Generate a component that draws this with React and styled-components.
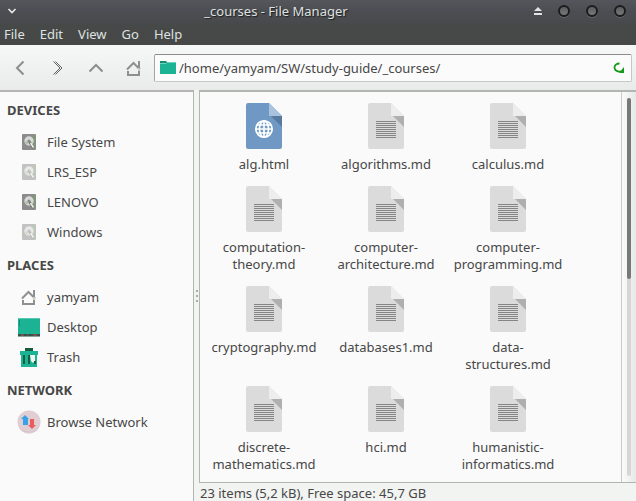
import React from "react";
import styled, { createGlobalStyle } from "styled-components";

const GlobalStyle = createGlobalStyle`
  * { box-sizing: border-box; }
  body { margin: 0; font: 13px/17px "Noto Sans", sans-serif; color: #474747; }
  button, input { font: inherit; color: inherit; }
  svg { display: block; flex: none; }
`;

const Shell = styled.div`
  display: flex;
  flex-direction: column;
  height: 100vh;
  background: #f2f4f2;
`;

const TopBar = styled.header`
  flex: none;
  background: linear-gradient(#55565b, #4c4d52 12px, #464948 26px, #454847);
  color: #dfe1e0;
`;

const TitleRow = styled.div`
  display: flex;
  align-items: center;
  height: 21px;
  padding: 0 10px 0 6px;
`;

const Title = styled.h1`
  flex: 1;
  margin: 0;
  padding-top: 2px;
  font-size: 13px;
  font-weight: 400;
  text-align: center;
  text-shadow: 1px 1px 1px #1d1e20;
`;

const PlainButton = styled.button`
  display: flex;
  align-items: center;
  justify-content: center;
  padding: 0;
  border: 0;
  background: none;
`;

const WindowControls = styled.div`
  display: flex;
  gap: 16px;
`;

const Orb = styled(PlainButton)`
  width: 12px;
  height: 12px;
  border: 2px solid #1b1c1e;
  border-radius: 50%;
  background: linear-gradient(#5b5c5f, #77787a);
  box-shadow: 0 1px 0 #65676a;
`;

const MenuRow = styled.nav`
  display: flex;
  gap: 15px;
  height: 24px;
  padding: 5px 4px 2px;
`;

const Toolbar = styled.div`
  flex: none;
  display: flex;
  align-items: center;
  height: 45px;
  padding: 0 4px 0 1px;
  background: linear-gradient(#f6f8f8, #e8ebea);
`;

const ToolButton = styled(PlainButton)`
  width: 38px;
  height: 32px;
`;

const AddressBar = styled.label`
  flex: 1;
  display: flex;
  align-items: center;
  gap: 3px;
  height: 28px;
  margin-left: 1px;
  padding: 0 6px 0 5px;
  border: 1px solid #c6c8c6;
  border-top-color: #8d8b8f;
  border-left-color: #a5a5a7;
  border-radius: 2px;
  background: #fbfbfb;
`;

const PathInput = styled.input`
  flex: 1;
  min-width: 0;
  padding: 2px 0 0;
  border: 0;
  outline: 0;
  background: none;
`;

const Body = styled.div`
  flex: 1;
  min-height: 0;
  display: grid;
  grid-template-columns: 194px 5px minmax(0, 1fr);
`;

const Sidebar = styled.aside`
  border-top: 2px solid #b4b5b4;
  border-right: 1px solid #b3b5b0;
  background: #fafafa;
`;

const SectionTitle = styled.h2`
  margin: 0;
  padding: 10px 7px 8px;
  font-size: 13px;
  font-weight: 700;
  line-height: 17px;
`;

const PlaceList = styled.ul`
  margin: 0;
  padding: 0;
  list-style: none;
`;

const Place = styled(PlainButton)`
  justify-content: flex-start;
  gap: 6px;
  width: 100%;
  height: 30px;
  padding-left: 17px;
`;

const IconSlot = styled.span`
  display: flex;
  justify-content: center;
  width: 24px;
  opacity: ${(p) => (p.$dim ? 0.5 : 1)};
`;

const Sash = styled.div`
  display: flex;
  flex-direction: column;
  align-items: center;
  justify-content: center;
  gap: 3px;
`;

const Grip = styled.span`
  width: 2px;
  height: 2px;
  background: #a9aba8;
`;

const Main = styled.main`
  display: flex;
  flex-direction: column;
  min-height: 0;
`;

const FilePane = styled.section`
  flex: 1;
  min-height: 0;
  display: flex;
  border: solid #b3b5b0;
  border-width: 2px 0 1px 1px;
  background: #fafafa;
`;

const FileGrid = styled.ul`
  flex: 1;
  display: grid;
  grid-template-columns: repeat(auto-fill, 122px);
  align-content: start;
  row-gap: 13px;
  margin: 0;
  padding: 11px 3px 0;
  overflow: hidden;
  list-style: none;
`;

const FileItem = styled.li`
  display: flex;
  flex-direction: column;
  align-items: center;
  gap: 7px;
`;

const FileName = styled.span`
  max-width: 112px;
  text-align: center;
`;

const ScrollTrack = styled.div`
  flex: none;
  width: 15px;
  padding: 6px 5px;
  border-left: 1px solid #c9cbc9;
  background: linear-gradient(90deg, #fafafa, #e6e9e7);
`;

const ScrollGroove = styled.div`
  height: 100%;
  border-radius: 2px;
  background: #d5d6d5;
`;

const ScrollThumb = styled.div`
  width: 4px;
  height: 48%;
  border-radius: 2px;
  background: #777878;
`;

const StatusBar = styled.footer`
  flex: none;
  height: 18px;
  padding: 2px 1px 0;
  line-height: 16px;
`;

const Chevron = ({ d, light, color = "#8c8e8d" }) => (
  <svg width="16" height="16" fill="none" stroke={color} strokeWidth={light ? 1 : 2}>
    <path d={d} />
  </svg>
);

const HomeIcon = () => (
  <svg width="16" height="16" fill="none" stroke="#8e908f" strokeWidth="2">
    <path d="M1 9.5 7.5 3 14 9.5" />
    <path d="M13 1v7" />
    <path d="M2 11v4h11v-4" />
    <path d="M13 8v3" stroke="#c9cbca" />
  </svg>
);

const FolderIcon = () => (
  <svg width="16" height="16" viewBox="0 0 16 16">
    <path d="M0 1h6l1 1h9v2H0z" fill="#118d72" />
    <path d="M0 3h6l1-1h9v12H0z" fill="#1bb394" />
    <path d="M0 3.500h6l1-1h9" stroke="#6fd2bf" fill="none" />
  </svg>
);

const ReloadIcon = () => (
  <svg width="12" height="12" fill="none">
    <path d="M6.500 1.500C3.500 1.500 1.500 3.500 1.500 5.500S3.500 10 8 9.500" stroke="#159a1b" strokeWidth="1.800" />
    <path d="M11 5v6H6z" fill="#159a1b" />
  </svg>
);

const DriveIcon = () => (
  <svg width="14" height="16">
    <rect width="14" height="16" rx="1" fill="#8b8c8b" />
    <path d="M11 1h2v14h-1z" fill="#7c9c6e" />
    <circle cx="7" cy="7" r="4.700" fill="#d6d9d5" />
    <path d="M2.500 8 7 7l-2 4z" fill="#a9c5a2" />
    <circle cx="7" cy="7" r="1.600" fill="#8b8c8b" />
    <path d="m7.500 8 4 6" stroke="#73756f" strokeWidth="2.500" />
    <path d="m8.500 9 3 4.500" stroke="#eff1ee" strokeWidth="1.500" />
  </svg>
);

const DesktopIcon = () => (
  <svg width="22" height="19">
    <path d="M0 0h22v17H0z" fill="#1bb394" />
    <path d="M0 .5h22" stroke="#58c9b2" />
    <path d="M1.500 2v6" stroke="#118d72" />
    <path d="M0 16h22v2H0z" fill="#34534c" />
    <path d="M0 18.500h22" stroke="#8fa29d" />
    <path d="M3 17h3m3 0h1m5 0h4" stroke="#b9504d" />
  </svg>
);

const TrashIcon = () => (
  <svg width="18" height="19">
    <path d="M5 0h8v3H5z" fill="#145c3c" />
    <path d="M0 3h18v4H0z" fill="#1bb394" />
    <path d="M1 7h16v12H1z" fill="#1bb394" />
    <path d="M3 7h2v9H3zM8 7h2v9H8z" fill="#10623f" />
    <path d="M10 7h5v6l-2 2-2-2z" fill="#f3f5f4" />
    <path d="M14 13h2v3h-2z" fill="#10623f" />
  </svg>
);

const NetworkIcon = () => (
  <svg width="24" height="24">
    <circle cx="12" cy="12" r="11.500" fill="#e0ced3" />
    <path d="M1.200 15A11.500 11.500 0 0 0 22.800 15 12 12 0 0 1 1.200 15" fill="#d5bfc6" />
    <path d="M8 5 4 9h2v6h5V9h1z" fill="#37a2e8" />
    <path d="M13 9h4v6h2l-4 4-4-4h2z" fill="#e85d60" />
  </svg>
);

const FileIcon = ({ web }) => (
  <svg width="36" height="46">
    <path d="M2 0h21l13 13v31a2 2 0 0 1-2 2H2a2 2 0 0 1-2-2V2a2 2 0 0 1 2-2z" fill={web ? "#6f99c4" : "#dbdbdb"} />
    <path d="M23 0 36 13H23z" fill={web ? "#a9c2dd" : "#ededed"} />
    <path d="M25 13h11v11z" fill={web ? "#587a9f" : "#afafaf"} />
    {web ? (
      <g fill="none" stroke="#fff" strokeWidth="1.700">
        <circle cx="18" cy="26" r="8.200" />
        <ellipse cx="18" cy="26" rx="4.500" ry="8.200" />
        <path d="M18 18v16M10 26h16M11 22h14M11 30h14" />
      </g>
    ) : (
      <path
        d="M8 18.500h20M8 20.500h20M8 22.500h20M8 24.500h20M8 26.500h20M8 28.500h20M8 30.500h20M8 32.500h20M8 34.500h20"
        stroke="#858585"
      />
    )}
  </svg>
);

const sections = [
  {
    title: "DEVICES",
    places: [
      { name: "File System", Icon: DriveIcon },
      { name: "LRS_ESP", Icon: DriveIcon, dim: true },
      { name: "LENOVO", Icon: DriveIcon },
      { name: "Windows", Icon: DriveIcon, dim: true },
    ],
  },
  {
    title: "PLACES",
    places: [
      { name: "yamyam", Icon: HomeIcon },
      { name: "Desktop", Icon: DesktopIcon },
      { name: "Trash", Icon: TrashIcon },
    ],
  },
  { title: "NETWORK", places: [{ name: "Browse Network", Icon: NetworkIcon }] },
];

const files = [
  "alg.html",
  "algorithms.md",
  "calculus.md",
  "computation-theory.md",
  "computer-architecture.md",
  "computer-programming.md",
  "cryptography.md",
  "databases1.md",
  "data-structures.md",
  "discrete-mathematics.md",
  "hci.md",
  "humanistic-informatics.md",
];

export default function App() {
  return (
    <Shell>
      <GlobalStyle />
      <TopBar>
        <TitleRow>
          <PlainButton aria-label="Window menu">
            <svg width="12" height="12" fill="none" stroke="#e8e8e8" strokeWidth="1.600">
              <path d="m2.500 4 3.500 3.500L9.500 4" />
            </svg>
          </PlainButton>
          <Title>_courses - File Manager</Title>
          <WindowControls>
            <PlainButton aria-label="Keep above">
              <svg width="8" height="8" fill="#e2e4e3">
                <path d="M4 0 8 4H0zM0 6h8v2H0z" />
              </svg>
            </PlainButton>
            <Orb aria-label="Minimize" />
            <Orb aria-label="Maximize" />
            <Orb aria-label="Close" />
          </WindowControls>
        </TitleRow>
        <MenuRow>
          {["File", "Edit", "View", "Go", "Help"].map((name) => (
            <PlainButton key={name}>{name}</PlainButton>
          ))}
        </MenuRow>
      </TopBar>
      <Toolbar>
        <ToolButton aria-label="Back">
          <Chevron d="M11.500 1.500 5 8l6.500 6.500" />
        </ToolButton>
        <ToolButton aria-label="Forward">
          <Chevron light color="#5f6160" d="M3.500 1.500 10 8l-6.500 6.500M5.500 1.500 12 8l-6.500 6.500" />
        </ToolButton>
        <ToolButton aria-label="Up">
          <Chevron d="M1.500 11.500 8 5l6.500 6.500" />
        </ToolButton>
        <ToolButton aria-label="Home">
          <HomeIcon />
        </ToolButton>
        <AddressBar>
          <FolderIcon />
          <PathInput aria-label="Location" defaultValue="/home/yamyam/SW/study-guide/_courses/" />
          <PlainButton aria-label="Reload">
            <ReloadIcon />
          </PlainButton>
        </AddressBar>
      </Toolbar>
      <Body>
        <Sidebar>
          {sections.map(({ title, places }) => (
            <section key={title}>
              <SectionTitle>{title}</SectionTitle>
              <PlaceList>
                {places.map(({ name, Icon, dim }) => (
                  <li key={name}>
                    <Place>
                      <IconSlot $dim={dim}>
                        <Icon />
                      </IconSlot>
                      {name}
                    </Place>
                  </li>
                ))}
              </PlaceList>
            </section>
          ))}
        </Sidebar>
        <Sash>
          <Grip />
          <Grip />
          <Grip />
        </Sash>
        <Main>
          <FilePane>
            <FileGrid>
              {files.map((name) => (
                <FileItem key={name}>
                  <FileIcon web={name.endsWith(".html")} />
                  <FileName>{name}</FileName>
                </FileItem>
              ))}
            </FileGrid>
            <ScrollTrack>
              <ScrollGroove>
                <ScrollThumb />
              </ScrollGroove>
            </ScrollTrack>
          </FilePane>
          <StatusBar>23 items (5,2 kB), Free space: 45,7 GB</StatusBar>
        </Main>
      </Body>
    </Shell>
  );
}
